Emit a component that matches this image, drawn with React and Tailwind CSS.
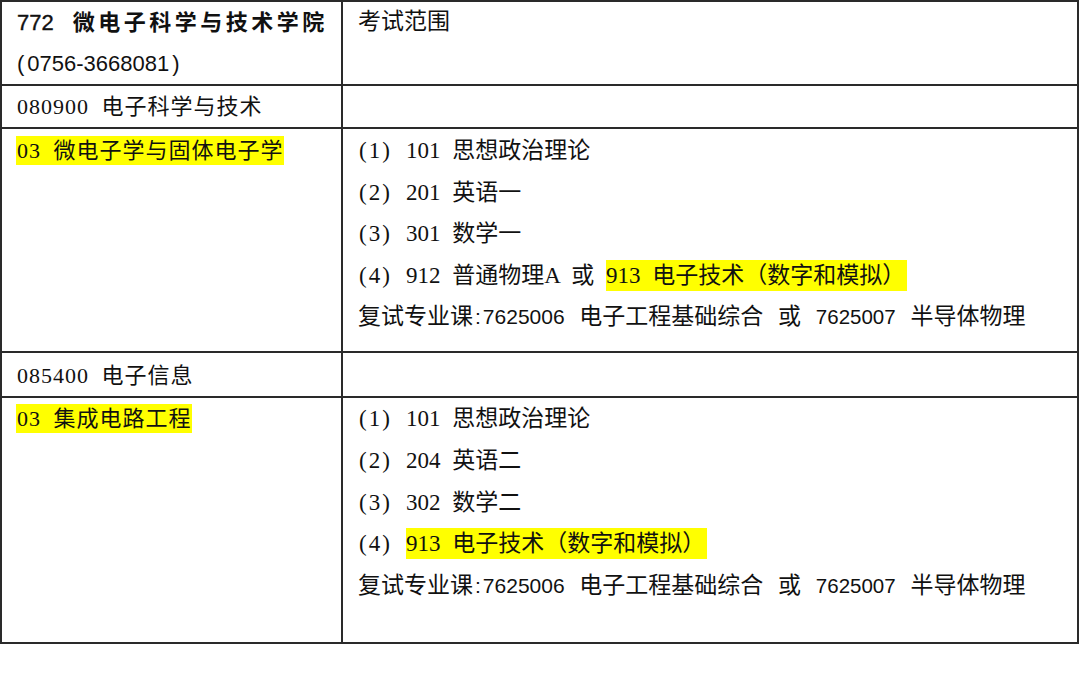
import React from "react";

const serif = "font-['Liberation_Serif','Noto_Sans_CJK_SC',serif]";
const sans = "font-['Liberation_Sans','Noto_Sans_CJK_SC',sans-serif]";

function Label({ n }) {
  return <span className="inline-block w-[48px] pl-[1px] tracking-[2px]">({n})</span>;
}

function Hl({ children, h = "leading-[30px]" }) {
  return <span className={`inline-block bg-[#ffff00] ${h}`}>{children}</span>;
}

function Retest() {
  return (
    <div className="whitespace-nowrap [word-spacing:9px]">
      复试专业课<span className={`${sans} text-[21px] mx-[2px]`}>:</span>
      <span className={`${sans} text-[21px]`}>7625006</span> 电子工程基础综合 或{" "}
      <span className={`${sans} text-[20.5px]`}>7625007</span> 半导体物理
    </div>
  );
}

export default function App() {
  return (
    <div className="w-[1080px] h-[685px] bg-white overflow-hidden">
      <div
        className={`w-[1079px] border-2 border-[#2a2a2a] text-[#111] ${serif} text-[23px] [word-spacing:6px]`}
      >
        {/* Header row */}
        <div className="flex h-[84px] border-b-2 border-[#2a2a2a]">
          <div className={`w-[341px] border-r-2 border-[#2a2a2a] pl-[15px] leading-[42px] ${sans}`}>
            <div className="whitespace-nowrap -mt-[1px]">
              <span className="text-[22px] [-webkit-text-stroke:0.4px_#111]">772</span>
              <span className="ml-[19px] text-[22px] font-bold tracking-[3.5px]">微电子科学与技术学院</span>
            </div>
            <div className="text-[22px] whitespace-nowrap -mt-[1px]">
              (<span className="ml-[3px] mr-[3px]">0756-3668081</span>)
            </div>
          </div>
          <div className="flex-1 pl-[15px] leading-[42px] -mt-[1px]">考试范围</div>
        </div>

        {/* 080900 */}
        <div className="flex h-[43px] border-b-2 border-[#2a2a2a]">
          <div className="w-[341px] border-r-2 border-[#2a2a2a] pl-[15px] leading-[41px] text-[22px] tracking-[1px]">
            080900 电子科学与技术
          </div>
          <div className="flex-1" />
        </div>

        {/* 03 微电子学与固体电子学 */}
        <div className="flex h-[224px] border-b-2 border-[#2a2a2a]">
          <div className="w-[341px] border-r-2 border-[#2a2a2a] pl-[14px] pt-[1px] leading-[41.6px] text-[22px] tracking-[1px]">
            <Hl h="leading-[29px] pl-[1px]">03 微电子学与固体电子学</Hl>
          </div>
          <div className="flex-1 pl-[15px] pt-[1px] leading-[41.6px]">
            <div><Label n="1" />101 思想政治理论</div>
            <div><Label n="2" />201 英语一</div>
            <div><Label n="3" />301 数学一</div>
            <div className="whitespace-nowrap">
              <Label n="4" />912 普通物理A 或 <Hl h="leading-[31px] pr-[2px]">913 电子技术（数字和模拟）</Hl>
            </div>
            <Retest />
          </div>
        </div>

        {/* 085400 */}
        <div className="flex h-[45px] border-b-2 border-[#2a2a2a]">
          <div className="w-[341px] border-r-2 border-[#2a2a2a] pl-[15px] pt-[2px] leading-[41px] text-[22px] tracking-[1px]">
            085400 电子信息
          </div>
          <div className="flex-1" />
        </div>

        {/* 03 集成电路工程 */}
        <div className="flex h-[244px]">
          <div className="w-[341px] border-r-2 border-[#2a2a2a] pl-[14px] leading-[41.75px] text-[22px] tracking-[1px]">
            <Hl h="leading-[29px] pl-[1px]">03 集成电路工程</Hl>
          </div>
          <div className="flex-1 pl-[15px] leading-[41.75px]">
            <div><Label n="1" />101 思想政治理论</div>
            <div><Label n="2" />204 英语二</div>
            <div><Label n="3" />302 数学二</div>
            <div className="whitespace-nowrap">
              <Label n="4" />
              <Hl h="leading-[31px] pr-[2px]">913 电子技术（数字和模拟）</Hl>
            </div>
            <Retest />
          </div>
        </div>
      </div>
    </div>
  );
}
